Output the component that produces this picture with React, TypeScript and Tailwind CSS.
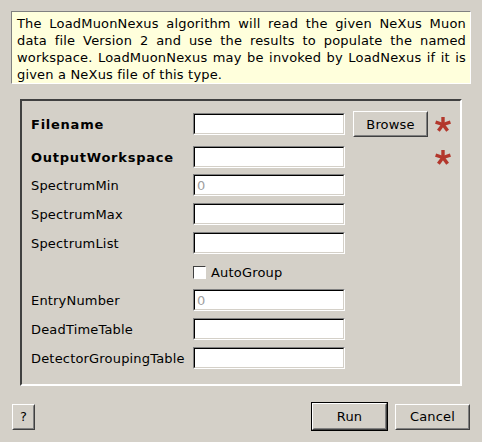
const description = [
  'The LoadMuonNexus algorithm will read the given NeXus Muon',
  'data file Version 2 and use the results to populate the named',
  'workspace. LoadMuonNexus may be invoked by LoadNexus if it is',
  'given a NeXus file of this type.',
];

// sunken line edit, windows-classic style
function Field({ placeholder }: { placeholder?: string }) {
  return (
    <div className="h-[22px] w-[152px] border border-t-[#808080] border-l-[#808080] border-b-white border-r-white">
      <div className="flex h-full items-center border border-t-black border-l-black border-b-[#d4d0c8] border-r-[#d4d0c8] bg-white pl-[2px] text-[#a0a0a0]">
        {placeholder}
      </div>
    </div>
  );
}

function Button({ label, className = '' }: { label: string; className?: string }) {
  return (
    <div
      className={`border border-t-white border-l-white border-b-[#404040] border-r-[#404040] bg-[#d4d0c8] ${className}`}
    >
      <div className="flex h-full items-center justify-center border border-t-[#d4d0c8] border-l-[#d4d0c8] border-b-[#808080] border-r-[#808080]">
        {label}
      </div>
    </div>
  );
}

function Star() {
  return (
    <svg width="16" height="16" viewBox="0 0 16 16" className="ml-[7px]">
      <g stroke="#b3372c" strokeWidth="3.4" strokeLinecap="butt">
        <line x1="8" y1="8.5" x2="8" y2="1" />
        <line x1="8" y1="8.5" x2="15.4" y2="6.1" />
        <line x1="8" y1="8.5" x2="12.6" y2="14.8" />
        <line x1="8" y1="8.5" x2="3.4" y2="14.8" />
        <line x1="8" y1="8.5" x2="0.6" y2="6.1" />
      </g>
    </svg>
  );
}

function Row({
  label,
  bold,
  mt,
  children,
}: {
  label: string;
  bold?: boolean;
  mt: string;
  children: React.ReactNode;
}) {
  return (
    <div className={`flex items-center ${mt}`}>
      <div className={`w-[162px] ${bold ? 'font-bold tracking-[0.75px]' : ''}`}>{label}</div>
      {children}
    </div>
  );
}

export default function App() {
  return (
    <div
      className="relative h-[442px] w-[482px] overflow-hidden bg-[#d4d0c8] text-[13px] leading-[17px] tracking-[0.18px] text-black"
      style={{ fontFamily: '"DejaVu Sans", sans-serif' }}
    >
      <div className="ml-[11px] mt-[11px] h-[73px] w-[460px] border border-t-[#808080] border-l-[#808080] border-b-white border-r-white bg-[#ffffdc] pl-[5px] pr-[4px] pt-[3px]">
        {description.map((line, i) => (
          <div
            key={i}
            className={i < description.length - 1 ? 'text-justify [text-align-last:justify]' : ''}
          >
            {line}
          </div>
        ))}
      </div>

      <div className="ml-[20px] mt-[15px] h-[287px] w-[442px] border-2 border-t-[#404040] border-l-[#404040] border-b-white border-r-white">
        <div className="flex flex-col pl-[9px]">
          <Row label="Filename" bold mt="mt-[10px] h-[26px]">
            <Field />
            <Button label="Browse" className="ml-[8px] h-[26px] w-[75px]" />
            <Star />
          </Row>
          <Row label="OutputWorkspace" bold mt="mt-[9px] h-[22px]">
            <Field />
            <div className="w-[83px]" />
            <Star />
          </Row>
          <Row label="SpectrumMin" mt="mt-[6px] h-[22px]">
            <Field placeholder="0" />
          </Row>
          <Row label="SpectrumMax" mt="mt-[7px] h-[22px]">
            <Field />
          </Row>
          <Row label="SpectrumList" mt="mt-[7px] h-[22px]">
            <Field />
          </Row>
          <Row label="" mt="mt-[7px] h-[22px]">
            <div className="h-[13px] w-[13px] border border-t-[#404040] border-l-[#404040] border-b-white border-r-white bg-white" />
            <span className="ml-[5px]">AutoGroup</span>
          </Row>
          <Row label="EntryNumber" mt="mt-[6px] h-[22px]">
            <Field placeholder="0" />
          </Row>
          <Row label="DeadTimeTable" mt="mt-[7px] h-[22px]">
            <Field />
          </Row>
          <Row label="DetectorGroupingTable" mt="mt-[7px] h-[22px]">
            <Field />
          </Row>
        </div>
      </div>

      <div className="mt-[16px] flex items-center">
        <Button label="?" className="ml-[12px] h-[26px] w-[23px]" />
        <div className="ml-[276px] h-[29px] w-[77px] border border-black">
          <Button label="Run" className="h-full w-full" />
        </div>
        <Button label="Cancel" className="ml-[7px] h-[26px] w-[75px]" />
      </div>
    </div>
  );
}
